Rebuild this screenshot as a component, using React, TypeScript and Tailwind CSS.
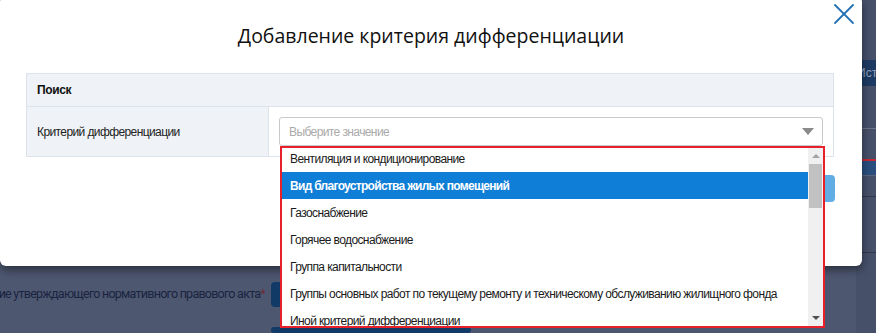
import { X } from 'lucide-react'

const items = [
  'Вентиляция и кондиционирование',
  'Вид благоустройства жилых помещений',
  'Газоснабжение',
  'Горячее водоснабжение',
  'Группа капитальности',
  'Группы основных работ по текущему ремонту и техническому обслуживанию жилищного фонда',
  'Иной критерий дифференциации',
]

function Background() {
  return (
    <div className="absolute inset-0 flex bg-[#4d5770]">
      <div className="flex-1 flex flex-col pt-[282px]">
        <div className="flex items-start gap-[6px]">
          <div className="w-[265px] overflow-hidden whitespace-nowrap text-right text-[12.5px] tracking-[-0.75px] leading-[24px] text-[#1b2440] [font-family:Roboto,sans-serif] [direction:rtl]">
            <span className="[direction:ltr] [unicode-bidi:isolate]">
              ние утверждающего нормативного правового акта<span className="text-[#6a2a35]">*</span>
            </span>
          </div>
          <div className="w-[200px] h-[25px] rounded bg-[#113a66]" />
        </div>
        <div className="mt-[20px] ml-[271px] w-[200px] h-[25px] rounded bg-[#113a66]" />
      </div>
      <div className="w-[20px] flex flex-col pt-[60px] bg-[#465069]">
        <div className="h-[26px] bg-[#1d3a63] text-[12px] leading-[26px] text-[#8fa0bb] [font-family:'Liberation_Sans',sans-serif] pl-[1px] overflow-hidden whitespace-nowrap">
          Ист
        </div>
        <div className="mt-[42px] h-px bg-[#6b7488]" />
        <div className="mt-[30px] h-[2px] bg-[#c42a35]" />
        <div className="h-[14px] bg-[#2a4e7e]" />
        <div className="h-px bg-[#5d667c]" />
        <div className="mt-[20px] h-px bg-[#2f374b]" />
        <div className="mt-[55px] h-px bg-[#2f374b]" />
      </div>
    </div>
  )
}

function Dropdown() {
  return (
    <div className="absolute left-[280px] top-[146px] w-[545px] h-[182px] border-2 border-[#e8202a] bg-white flex overflow-hidden [font-family:'Liberation_Sans',Arial,sans-serif]">
      <div className="flex-1 overflow-hidden">
        <div className="-mt-[3px]">
          {items.map((t, i) => (
            <div
              key={t}
              className={`h-[27px] pl-[8px] flex items-center whitespace-nowrap text-[12px] ${
                i === 1 ? 'bg-[#0e7ed6] text-white font-bold tracking-[-0.7px]' : 'text-[#1a1a1a] tracking-[-0.6px]'
              }`}
            >
              {t}
            </div>
          ))}
        </div>
      </div>
      <div className="w-[15px] bg-[#f0f0f0] flex flex-col items-center">
        <div className="h-[16px] flex items-center justify-center">
          <div className="w-0 h-0 border-l-[4px] border-r-[4px] border-b-[4px] border-l-transparent border-r-transparent border-b-[#a3a3a3]" />
        </div>
        <div className="w-[13px] h-[44px] bg-[#c1c1c1]" />
        <div className="flex-1" />
        <div className="h-[16px] flex items-center justify-center">
          <div className="w-0 h-0 border-l-[4px] border-r-[4px] border-t-[4px] border-l-transparent border-r-transparent border-t-[#505050]" />
        </div>
      </div>
    </div>
  )
}

export default function App() {
  return (
    <div className="relative w-[876px] h-[333px] overflow-hidden">
      <Background />
      <div className="absolute left-0 -top-[4px] w-[862px] h-[270px] bg-white rounded-md shadow-[0_4px_10px_rgba(0,0,0,0.45)] flex flex-col">
        <button className="absolute right-0 top-0 text-[#2372b6]" aria-label="Закрыть">
          <X className="w-[36px] h-[36px]" strokeWidth={1.2} />
        </button>
        <h2 className="pt-[26px] text-center text-[19.5px] leading-[28px] text-[#111] [font-family:'Open_Sans',sans-serif]">
          Добавление критерия дифференциации
        </h2>
        <div className="mt-[23px] mx-[26px] w-[808px] border border-[#dde3ea] [font-family:'Liberation_Sans',Arial,sans-serif] text-[12px]">
          <div className="h-[33px] bg-[#eff3f7] border-b border-[#dde3ea] pl-[10px] flex items-center font-bold text-[#111] tracking-[-0.4px]">
            Поиск
          </div>
          <div className="h-[49px] flex">
            <div className="w-[242px] bg-[#eff3f7] border-r border-[#dde3ea] pl-[10px] flex items-center text-[#222] tracking-[-0.6px]">
              Критерий дифференциации
            </div>
            <div className="flex-1 pl-[10px] pr-[10px] pt-[10px] bg-white">
              <div className="h-[29px] border border-[#c9c9c9] rounded-[3px] flex items-center pl-[9px] pr-[8px] text-[#aaa] tracking-[-0.6px]">
                <span className="flex-1">Выберите значение</span>
                <div className="w-0 h-0 border-l-[6px] border-r-[6px] border-t-[7px] border-l-transparent border-r-transparent border-t-[#8a8a8a]" />
              </div>
            </div>
          </div>
        </div>
        <div className="mt-[18px] mr-[27px] self-end w-[110px] h-[27px] rounded bg-[#62ade4]" />
      </div>
      <Dropdown />
    </div>
  )
}
